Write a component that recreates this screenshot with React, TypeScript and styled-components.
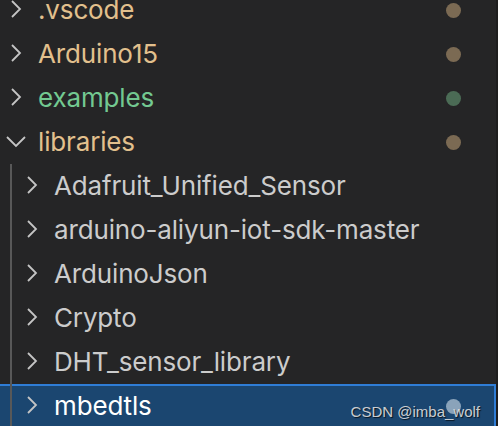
import styled, { createGlobalStyle } from 'styled-components'

// ==================== 全局 ====================

const Global = createGlobalStyle`
  html, body {
    margin: 0;
    padding: 0;
    background: #252526;
    overflow: hidden;
  }
  #root {
    height: 426px;
  }
`

// ==================== 样式组件 ====================

const Sidebar = styled.div`
  display: flex;
  height: 426px;
  overflow: hidden;
  position: relative;
  font-family: Inter, "Noto Sans", "Liberation Sans", sans-serif;
`

const Tree = styled.div`
  flex: 1;
  margin-top: -12px;
  background: #252526;
`

const Edge = styled.div`
  width: 2px;
  background: #1e1e1e;
`

type Tone = 'modified' | 'untracked' | 'plain'

const textColor: Record<Tone, string> = {
  modified: '#e2c08d',
  untracked: '#73c991',
  plain: '#cccccc',
}

const dotColor: Record<Tone, string> = {
  modified: '#7b6a53',
  untracked: '#4b6b55',
  plain: 'transparent',
}

const Row = styled.div<{ $depth: number; $selected?: boolean }>`
  position: relative;
  box-sizing: border-box;
  height: 44px;
  display: flex;
  align-items: center;
  padding-left: ${p => 1 + p.$depth * 16}px;
  background: ${p => (p.$selected ? '#1b4670' : 'transparent')};
  border: 2px solid ${p => (p.$selected ? '#2f7dd6' : 'transparent')};
  margin-left: -2px;

  /* 缩进参考线 */
  &::before {
    content: '';
    display: ${p => (p.$depth > 0 ? 'block' : 'none')};
    position: absolute;
    left: 10px;
    top: -2px;
    bottom: -2px;
    width: 2px;
    background: #585858;
  }
`

const Twistie = styled.span`
  width: 32px;
  height: 32px;
  flex: none;
  display: flex;
  align-items: center;
  justify-content: center;
  color: #c5c5c5;
`

const Label = styled.span<{ $tone: Tone; $selected?: boolean }>`
  flex: 1;
  margin-left: 5px;
  font-size: 26px;
  letter-spacing: -0.15px;
  line-height: 44px;
  white-space: nowrap;
  color: ${p => (p.$selected ? '#ffffff' : textColor[p.$tone])};
`

const Dot = styled.span<{ $color: string }>`
  width: 15px;
  height: 15px;
  border-radius: 50%;
  background: ${p => p.$color};
  margin-right: 33px;
  flex: none;
`

const Watermark = styled.div`
  position: absolute;
  right: 18px;
  bottom: 6px;
  font-family: "Liberation Sans", Arial, sans-serif;
  font-size: 15px;
  color: rgba(225, 225, 225, 0.9);
  text-shadow: 1px 1px 1px rgba(0, 0, 0, 0.7);
  pointer-events: none;
`

// ==================== 图标 ====================

function Chevron({ open }: { open?: boolean }) {
  return (
    <svg width="24" height="24" viewBox="0 0 24 24" fill="none">
      {open ? (
        <polyline points="2,7 11,16 20,7" stroke="currentColor" strokeWidth="1.8" />
      ) : (
        <polyline points="7,3 15,11 7,19" stroke="currentColor" strokeWidth="1.8" />
      )}
    </svg>
  )
}

// ==================== 数据 ====================

interface Node {
  name: string
  depth: number
  tone: Tone
  open?: boolean
  dot?: boolean
  selected?: boolean
}

const nodes: Node[] = [
  { name: '.vscode', depth: 0, tone: 'modified', dot: true },
  { name: 'Arduino15', depth: 0, tone: 'modified', dot: true },
  { name: 'examples', depth: 0, tone: 'untracked', dot: true },
  { name: 'libraries', depth: 0, tone: 'modified', dot: true, open: true },
  { name: 'Adafruit_Unified_Sensor', depth: 1, tone: 'plain' },
  { name: 'arduino-aliyun-iot-sdk-master', depth: 1, tone: 'plain' },
  { name: 'ArduinoJson', depth: 1, tone: 'plain' },
  { name: 'Crypto', depth: 1, tone: 'plain' },
  { name: 'DHT_sensor_library', depth: 1, tone: 'plain' },
  { name: 'mbedtls', depth: 1, tone: 'plain', dot: true, selected: true },
]

// ==================== 组件 ====================

export default function App() {
  return (
    <>
      <Global />
      <Sidebar>
        <Tree>
          {nodes.map(n => (
            <Row key={n.name} $depth={n.depth} $selected={n.selected}>
              <Twistie>
                <Chevron open={n.open} />
              </Twistie>
              <Label $tone={n.tone} $selected={n.selected}>{n.name}</Label>
              {n.dot && <Dot $color={n.selected ? '#8aa3ba' : dotColor[n.tone]} />}
            </Row>
          ))}
        </Tree>
        <Edge />
        <Watermark>CSDN @imba_wolf</Watermark>
      </Sidebar>
    </>
  )
}
